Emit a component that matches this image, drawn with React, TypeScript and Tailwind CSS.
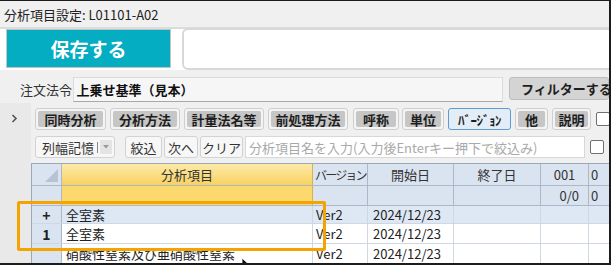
import React from "react";

const F = "font-['Noto_Sans_CJK_JP','Noto_Sans',sans-serif]";

function TBtn({ w, ml, children }: { w: string; ml: string; children: React.ReactNode }) {
  return (
    <div className={`${w} ${ml} h-[22px] shrink-0 rounded-[3px] border border-[#cfcfcf] bg-[#f4f4f4] p-[2px]`}>
      <div className="h-full w-full rounded-[2px] bg-[#c6c6c6] flex items-center justify-center text-[13px] font-bold text-[#1e1e1e] leading-none whitespace-nowrap">
        {children}
      </div>
    </div>
  );
}

function SBtn({ w, ml, children }: { w: string; ml: string; children: React.ReactNode }) {
  return (
    <div className={`${w} ${ml} h-[22px] shrink-0 rounded-[3px] border border-[#d2d2d2] bg-[#f7f7f7] flex items-center justify-center text-[13px] text-[#333] leading-none whitespace-nowrap`}>
      {children}
    </div>
  );
}

function Check({ mt }: { mt: string }) {
  return <div className={`${mt} ml-[5px] w-[14px] h-[14px] shrink-0 rounded-[2px] border border-[#707070] bg-white`} />;
}

export default function App() {
  return (
    <div className={`${F} relative w-[611px] h-[265px] overflow-hidden bg-[#f0f0f0] border-t border-r-2 border-b-2 border-[#1c1c1c] text-[#222]`}>
      {/* title */}
      <div className="h-[26px] flex items-center pl-[4px] text-[13px] leading-none text-[#222]">分析項目設定: L01101-A02</div>
      <div className="h-[2px] bg-[#dcdcdc]" />
      {/* save row */}
      <div className="h-[41px] bg-white flex">
        <div className="ml-[6px] w-[165px] h-[39px] border border-[#c4c4c4] bg-[#05adc3] flex items-center justify-center text-white font-bold text-[19px] leading-none">
          保存する
        </div>
        <div className="ml-[11px] -mt-[1px] h-[42px] flex-1 -mr-[10px] rounded-md border-2 border-[#d8d8d8] bg-white" />
      </div>
      {/* law row */}
      <div className="h-[33px] flex items-start pt-[7px]">
        <div className="ml-[20px] w-[55px] h-[25px] flex items-center text-[13px] leading-none text-[#333]">注文法令</div>
        <div className="w-[442px] h-[25px] border border-[#dcdcdc] border-b-[#a8a8a8] bg-[#f6f6f6] flex items-center pl-[2px] text-[13px] font-bold leading-none text-[#111]">
          上乗せ基準（見本）
        </div>
        <div className="ml-[6px] w-[100px] h-[23px] shrink-0 rounded-[3px] border border-[#bdbdbd] bg-[#d4d4d4] flex items-center pl-[11px] text-[13px] font-bold leading-none text-[#1e1e1e] whitespace-nowrap">
          フィルターする
        </div>
      </div>
      {/* lower */}
      <div className="flex h-[160px]">
        <div className="w-[31px] shrink-0 bg-[#e9e9e9] flex justify-center pt-[11px]">
          <svg width="7" height="9" viewBox="0 0 7 9" className="ml-[-2px]">
            <path d="M1.5 1 L5 4.5 L1.5 8" stroke="#555" strokeWidth="1.6" fill="none" />
          </svg>
        </div>
        <div className="flex-1 flex flex-col">
          {/* toolbar row 1 */}
          <div className="flex mt-[5px] h-[22px]">
            <TBtn w="w-[71px]" ml="ml-[4px]">同時分析</TBtn>
            <TBtn w="w-[70px]" ml="ml-[4px]">分析方法</TBtn>
            <TBtn w="w-[80px]" ml="ml-[4px]">計量法名等</TBtn>
            <TBtn w="w-[80px]" ml="ml-[4px]">前処理方法</TBtn>
            <TBtn w="w-[46px]" ml="ml-[5px]">呼称</TBtn>
            <TBtn w="w-[42px]" ml="ml-[3px]">単位</TBtn>
            <div className="ml-[4px] w-[63px] h-[22px] shrink-0 rounded-[3px] border border-[#5f9ad2] bg-[#e2edf8] flex items-center justify-center text-[13px] font-bold leading-none text-[#1e1e1e] whitespace-nowrap tracking-[-0.5px]">
              ﾊﾞｰｼﾞｮﾝ
            </div>
            <TBtn w="w-[33px]" ml="ml-[4px]">他</TBtn>
            <TBtn w="w-[39px]" ml="ml-[4px]">説明</TBtn>
            <Check mt="mt-[4px]" />
          </div>
          {/* toolbar row 2 */}
          <div className="flex mt-[6px] h-[22px]">
            <div className="ml-[4px] w-[80px] h-[22px] shrink-0 rounded-[3px] border border-[#d2d2d2] bg-[#f7f7f7] flex items-center">
              <span className="pl-[6px] text-[13px] leading-none text-[#333] whitespace-nowrap">列幅記憶</span>
              <span className="ml-[3px] w-[1px] h-[11px] bg-[#888]" />
              <div className="ml-[2px] w-[12px] h-[14px] bg-[#e4e4e4] flex items-center justify-center">
                <svg width="6" height="4" viewBox="0 0 6 4"><path d="M0 0 L6 0 L3 3.5 Z" fill="#9a9a9a" /></svg>
              </div>
            </div>
            <SBtn w="w-[37px]" ml="ml-[10px]">絞込</SBtn>
            <SBtn w="w-[34px]" ml="ml-[2px]">次へ</SBtn>
            <SBtn w="w-[43px]" ml="ml-[2px]">クリア</SBtn>
            <div className="ml-[2px] w-[340px] h-[22px] shrink-0 border border-[#d8d8d8] bg-white flex items-center pl-[3px] text-[13px] leading-none text-[#a9a9a9] whitespace-nowrap">
              分析項目名を入力(入力後Enterキー押下で絞込み)
            </div>
            <Check mt="mt-[4px]" />
          </div>
          {/* grid */}
          <div className="mt-[5px] flex-1 border-l border-t border-[#9aa8bb] bg-white text-[13px] leading-none text-[#222]">
            {/* header 1 */}
            <div className="flex h-[22px] border-b border-[#aab8ca]">
              <div className="w-[30px] shrink-0 bg-[#dae4f0] border-r border-[#aab8ca] relative">
                <svg width="13" height="13" viewBox="0 0 13 13" className="absolute right-[3px] bottom-[3px]">
                  <path d="M13 0 L13 13 L0 13 Z" fill="#b7c3d3" />
                </svg>
              </div>
              <div className="w-[251px] shrink-0 bg-linear-to-b from-[#fdeaa8] to-[#f8d25e] border-r border-[#d7b24a] flex items-center justify-center text-[#333]">分析項目</div>
              <div className="w-[55px] shrink-0 bg-[#dae4f0] border-r border-[#aab8ca] flex items-center pl-[2px] text-[12px] tracking-[-1.8px] whitespace-nowrap overflow-hidden text-[#333]">バージョン</div>
              <div className="w-[86px] shrink-0 bg-[#dae4f0] border-r border-[#aab8ca] flex items-center justify-center text-[#333]">開始日</div>
              <div className="w-[87px] shrink-0 bg-[#dae4f0] border-r border-[#aab8ca] flex items-center justify-center text-[#333]">終了日</div>
              <div className="w-[48px] shrink-0 bg-[#dae4f0] border-r border-[#aab8ca] flex items-center justify-center text-[#333]">001</div>
              <div className="w-[60px] shrink-0 bg-[#dae4f0] flex items-center pl-[2px] text-[#333]">0</div>
            </div>
            {/* header 2 */}
            <div className="flex h-[20px] border-b border-[#aab8ca]">
              <div className="w-[30px] shrink-0 bg-[#dae4f0] border-r border-[#aab8ca]" />
              <div className="w-[251px] shrink-0 bg-[#fbd96e] border-r border-[#d7b24a]" />
              <div className="w-[55px] shrink-0 bg-[#dae4f0] border-r border-[#aab8ca]" />
              <div className="w-[86px] shrink-0 bg-[#dae4f0] border-r border-[#aab8ca]" />
              <div className="w-[87px] shrink-0 bg-[#dae4f0] border-r border-[#aab8ca]" />
              <div className="w-[48px] shrink-0 bg-[#dae4f0] border-r border-[#aab8ca] flex items-center justify-end pr-[9px] text-[#333]">0/0</div>
              <div className="w-[60px] shrink-0 bg-[#dae4f0] flex items-center pl-[2px] text-[#333]">0</div>
            </div>
            {/* row + */}
            <div className="flex h-[18px] border-b border-[#cfd7e3] bg-[#dde8f4]">
              <div className="w-[30px] shrink-0 bg-[#dae4f0] border-r border-[#aab8ca] flex items-center justify-center font-bold text-[14px]">+</div>
              <div className="w-[251px] shrink-0 border-r border-[#cfd7e3] flex items-center pl-[4px]">全室素</div>
              <div className="w-[55px] shrink-0 border-r border-[#cfd7e3] flex items-center pl-[3px]">Ver2</div>
              <div className="w-[86px] shrink-0 border-r border-[#cfd7e3] flex items-center pl-[5px]">2024/12/23</div>
              <div className="w-[87px] shrink-0 border-r border-[#cfd7e3]" />
              <div className="w-[48px] shrink-0 border-r border-[#cfd7e3]" />
              <div className="w-[60px] shrink-0" />
            </div>
            {/* row 1 */}
            <div className="flex h-[20px] border-b border-[#cfd7e3] bg-white">
              <div className="w-[30px] shrink-0 bg-[#dae4f0] border-r border-[#aab8ca] flex items-center justify-center font-bold text-[14px]">1</div>
              <div className="w-[251px] shrink-0 border-r border-[#cfd7e3] flex items-center pl-[4px]">全室素</div>
              <div className="w-[55px] shrink-0 border-r border-[#cfd7e3] flex items-center pl-[3px]">Ver2</div>
              <div className="w-[86px] shrink-0 border-r border-[#cfd7e3] flex items-center pl-[5px]">2024/12/23</div>
              <div className="w-[87px] shrink-0 border-r border-[#cfd7e3]" />
              <div className="w-[48px] shrink-0 border-r border-[#cfd7e3]" />
              <div className="w-[60px] shrink-0" />
            </div>
            {/* row 2 */}
            <div className="flex h-[20px] border-b border-[#cfd7e3] bg-white">
              <div className="w-[30px] shrink-0 bg-[#dae4f0] border-r border-[#aab8ca]" />
              <div className="w-[251px] shrink-0 border-r border-[#cfd7e3] flex items-center pl-[4px] whitespace-nowrap">硝酸性窒素及び亜硝酸性窒素</div>
              <div className="w-[55px] shrink-0 border-r border-[#cfd7e3] flex items-center pl-[3px]">Ver2</div>
              <div className="w-[86px] shrink-0 border-r border-[#cfd7e3] flex items-center pl-[5px]">2024/12/23</div>
              <div className="w-[87px] shrink-0 border-r border-[#cfd7e3]" />
              <div className="w-[48px] shrink-0 border-r border-[#cfd7e3]" />
              <div className="w-[60px] shrink-0" />
            </div>
          </div>
        </div>
      </div>

      {/* highlight overlay */}
      <div className="absolute left-[17px] top-[200px] w-[309px] h-[50px] border-[3px] border-[#f5a300] rounded-[2px] pointer-events-none" />
      {/* mouse cursor */}
      <svg width="10" height="14" viewBox="0 0 10 14" className="absolute left-[241px] top-[256px]">
        <path d="M1 1 L1 12 L4 9 L6 13 L7.5 12.3 L5.6 8.4 L9 8.4 Z" fill="#111" stroke="#fff" strokeWidth="0.8" />
      </svg>
    </div>
  );
}
